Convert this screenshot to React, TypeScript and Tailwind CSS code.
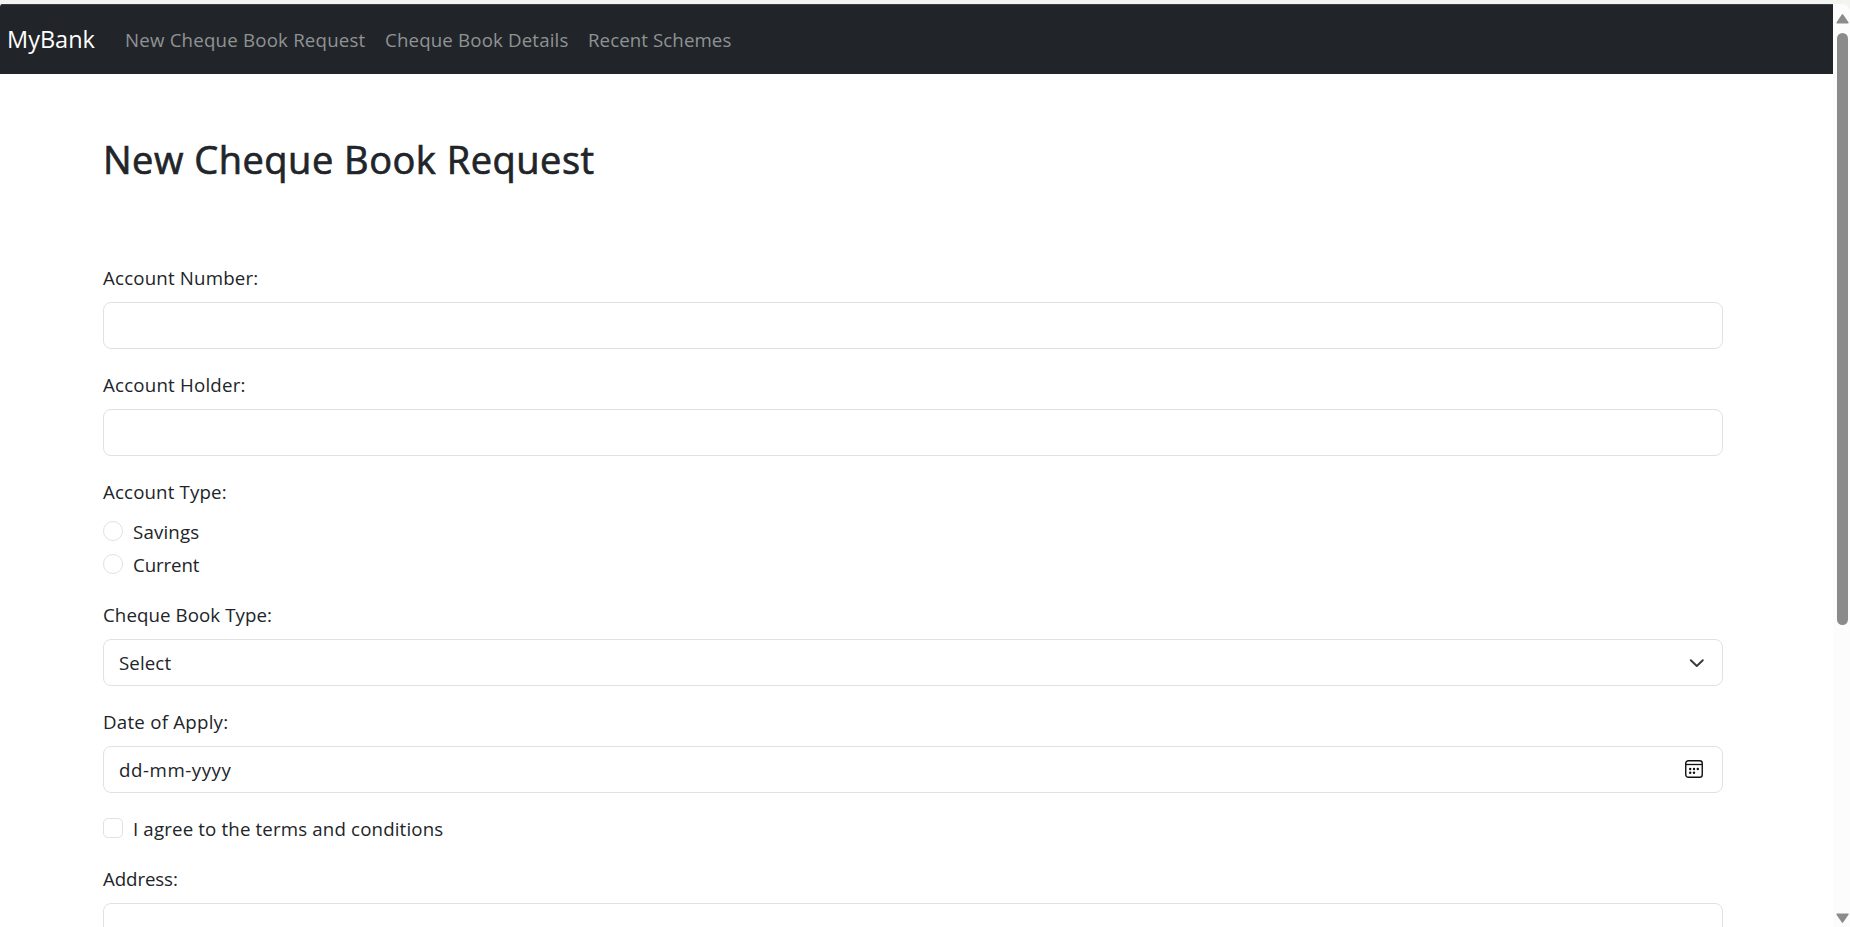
import type { ReactNode } from 'react'

function Label({ children, className = '' }: { children: ReactNode; className?: string }) {
  return <label className={`mb-2.5 block h-[30px] pt-px leading-[30px] ${className}`}>{children}</label>
}

function Choice({ children, box, className = '' }: { children: ReactNode; box: string; className?: string }) {
  return (
    <div className="flex h-[30px] items-start gap-2.5">
      <span className={`mt-[5px] size-5 shrink-0 border border-[#dee2e6] bg-white ${box}`} />
      <span className={`pt-px leading-[30px] ${className}`}>{children}</span>
    </div>
  )
}

function CalendarIcon() {
  return (
    <svg width="18" height="18" viewBox="0 0 18 18" fill="none" className="mb-px">
      <rect x="0.75" y="0.75" width="16.5" height="16.5" rx="2.6" stroke="#111" strokeWidth="1.4" />
      <path d="M1 4.5h16" stroke="#111" strokeWidth="1.3" />
      <g fill="#111">
        <circle cx="5.2" cy="9" r="1.2" />
        <circle cx="9" cy="9" r="1.2" />
        <circle cx="12.8" cy="9" r="1.2" />
        <circle cx="5.2" cy="12.7" r="1.2" />
        <circle cx="9" cy="12.7" r="1.2" />
      </g>
    </svg>
  )
}

function ScrollBar() {
  return (
    <div className="flex w-[17px] shrink-0 flex-col items-center bg-[#fcfcfc] pl-0.5 pt-2.5">
      <svg width="13" height="10" viewBox="0 0 13 10" className="shrink-0">
        <path d="M6.5 1 11.8 8.8H1.2Z" fill="#8b8b8b" stroke="#8b8b8b" strokeWidth="1.6" strokeLinejoin="round" />
      </svg>
      <div className="mt-[9px] h-[592px] w-[11px] shrink-0 rounded-full bg-[#8b8b8b]" />
      <svg width="13" height="10" viewBox="0 0 13 10" className="mb-1 mt-auto shrink-0">
        <path d="M6.5 9 11.8 1.2H1.2Z" fill="#8b8b8b" stroke="#8b8b8b" strokeWidth="1.6" strokeLinejoin="round" />
      </svg>
    </div>
  )
}

const control = 'flex h-[47px] items-center rounded-[8px] border border-[#dee2e6] bg-white'

export default function App() {
  return (
    <div className="flex h-[927px] w-[1850px] flex-col overflow-hidden bg-[#f3f3f2] font-['Open_Sans',sans-serif] text-[18.7px] text-[#212529]">
      <div className="h-1 shrink-0" />
      <div className="flex min-h-0 flex-1 overflow-hidden rounded-tl-[3px] rounded-tr-[8px] bg-white">
        <div className="flex min-w-0 flex-1 flex-col">
          <nav className="flex h-[70px] shrink-0 items-center whitespace-nowrap border-t border-[#3b3e41] bg-[#212529] pl-[7px] pt-px text-[#909294]">
            <span className="w-[88px] text-[23.5px] text-white">MyBank</span>
            <a className="ml-[30px] w-[240px] tracking-[0.19px]">New Cheque Book Request</a>
            <a className="ml-5 w-[183px] tracking-[0.15px]">Cheque Book Details</a>
            <a className="ml-5 tracking-[0.08px]">Recent Schemes</a>
          </nav>
          <main className="flex flex-col pl-[103px] pr-[110px] pt-[61px]">
            <h1 className="h-12 text-[38px] leading-[48px] tracking-[0.5px] [-webkit-text-stroke:0.7px_#212529]">
              New Cheque Book Request
            </h1>
            <form className="mt-[79px] flex flex-col gap-5">
              <div>
                <Label className="tracking-[0.18px]">Account Number:</Label>
                <div className={control} />
              </div>
              <div>
                <Label className="tracking-[0.2px]">Account Holder:</Label>
                <div className={control} />
              </div>
              <div>
                <Label className="tracking-[0.14px]">Account Type:</Label>
                <div className="flex flex-col gap-[3px]">
                  <Choice box="rounded-full" className="tracking-[0.15px]">Savings</Choice>
                  <Choice box="rounded-full" className="tracking-[-0.1px]">Current</Choice>
                </div>
              </div>
              <div>
                <Label className="tracking-[0.08px]">Cheque Book Type:</Label>
                <div className={`${control} justify-between pl-[15px] pr-[18px]`}>
                  <span className="pt-px tracking-[0.1px]">Select</span>
                  <svg width="15" height="10" viewBox="0 0 15 10" fill="none">
                    <path d="M1.8 2.2 7.8 8l6-5.8" stroke="#343a40" strokeWidth="1.9" strokeLinecap="round" strokeLinejoin="round" />
                  </svg>
                </div>
              </div>
              <div>
                <Label className="tracking-[0.24px]">Date of Apply:</Label>
                <div className={`${control} justify-between pl-[15px] pr-[19px]`}>
                  <span className="pt-px tracking-[0.55px]">dd-mm-yyyy</span>
                  <CalendarIcon />
                </div>
              </div>
              <Choice box="rounded-[5px]" className="tracking-[0.15px]">I agree to the terms and conditions</Choice>
              <div>
                <Label className="tracking-[-0.1px]">Address:</Label>
                <div className={control} />
              </div>
            </form>
          </main>
        </div>
        <ScrollBar />
      </div>
    </div>
  )
}
